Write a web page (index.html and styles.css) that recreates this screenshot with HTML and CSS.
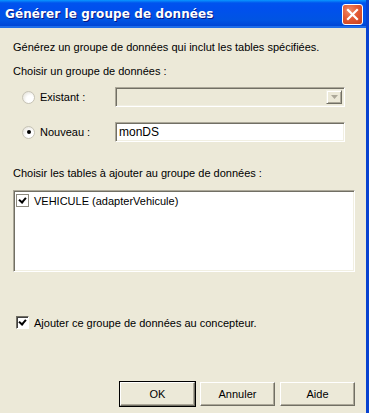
FILE: index.html
```html
<!DOCTYPE html>
<html lang="fr">
<head>
    <meta charset="UTF-8">
    <title>Générer le groupe de données</title>
    <link rel="stylesheet" href="styles.css">
</head>
<body>
    <div class="window">
        <div class="titlebar">
            <span class="title">Générer le groupe de données</span>
            <span class="close">
                <svg width="21" height="21" viewBox="0 0 21 21">
                    <path d="M6 6 L15 15 M15 6 L6 15" stroke="#fff" stroke-width="2.2" stroke-linecap="square"/>
                </svg>
            </span>
        </div>
        <div class="content">
            <p class="intro">Générez un groupe de données qui inclut les tables spécifiées.</p>
            <p class="label">Choisir un groupe de données :</p>

            <div class="choice">
                <span class="radio"></span>
                <span class="choice-label">Existant :</span>
                <div class="combo">
                    <span class="combo-btn">
                        <svg width="7" height="4" viewBox="0 0 7 4"><path d="M0 0 H7 L3.5 4 Z" fill="#aca899"/></svg>
                    </span>
                </div>
            </div>

            <div class="choice choice-new">
                <span class="radio checked"></span>
                <span class="choice-label">Nouveau :</span>
                <div class="field">monDS</div>
            </div>

            <p class="label label-tables">Choisir les tables à ajouter au groupe de données :</p>
            <div class="listbox">
                <div class="list-item">
                    <span class="check"></span>
                    <span>VEHICULE (adapterVehicule)</span>
                </div>
            </div>

            <div class="designer">
                <span class="check dark"></span>
                <span>Ajouter ce groupe de données au concepteur.</span>
            </div>

            <div class="buttons">
                <button class="btn default">OK</button>
                <button class="btn">Annuler</button>
                <button class="btn">Aide</button>
            </div>
        </div>
    </div>
</body>
</html>
```

FILE: styles.css
```css
body {
    margin: 0;
    background: #ece9d8;
    font-family: "Liberation Sans", Arial, sans-serif;
    font-size: 11px;
    color: #000;
}
.window {
    width: 369px;
    height: 413px;
    box-sizing: border-box;
    border-right: 3px solid #0842d0;
    background: #ece9d8;
}
.titlebar {
    height: 28px;
    display: flex;
    align-items: center;
    justify-content: space-between;
    padding: 0 3px 0 5px;
    background: linear-gradient(#0997ff 0, #0053ee 3px, #0050ee 8px, #0054e3 20px, #0046d5 26px, #3d95ff 27px, #0043cf 28px);
}
.title {
    color: #fff;
    font-family: "DejaVu Sans", sans-serif;
    font-weight: bold;
    font-size: 12px;
    letter-spacing: 0.1px;
    text-shadow: 1px 1px 0 #0a1883;
}
.close {
    width: 21px;
    height: 21px;
    box-sizing: border-box;
    border: 1px solid #fff;
    border-radius: 3px;
    background: radial-gradient(circle at 35% 30%, #f08c6a 0, #e35a34 45%, #c9401c 100%);
    display: flex;
    margin-top: 1px;
}
.close svg {
    margin: -1px;
}
.content {
    padding: 12px 11px 0 13px;
}
p {
    margin: 0;
    line-height: 13px;
}
.intro {
    margin-top: 1px;
}
.label {
    margin-top: 11px;
}
.choice {
    display: flex;
    align-items: center;
    margin-top: 9px;
    padding-left: 9px;
}
.choice-new {
    margin-top: 15px;
}
.radio {
    width: 11px;
    height: 11px;
    border-radius: 50%;
    border: 1px solid #c6c3b6;
    background: radial-gradient(circle at 65% 65%, #fff 0, #fff 35%, #dcd9cd 100%);
    display: flex;
    align-items: center;
    justify-content: center;
}
.radio.checked::after {
    content: "";
    width: 4px;
    height: 4px;
    border-radius: 50%;
    background: #000;
}
.choice-label {
    margin-left: 5px;
    width: 75px;
}
.combo,
.field {
    width: 230px;
    height: 20px;
    box-sizing: border-box;
    border-top: 1px solid #aca899;
    border-left: 1px solid #aca899;
    border-right: 1px solid #fff;
    border-bottom: 1px solid #fff;
    box-shadow: inset 1px 1px 0 #716f64, inset -1px -1px 0 #f1efe2;
}
.combo {
    background: #ece9d8;
    display: flex;
    justify-content: flex-end;
    padding: 2px;
}
.combo-btn {
    width: 16px;
    box-sizing: border-box;
    border-top: 1px solid #f1efe2;
    border-left: 1px solid #f1efe2;
    border-right: 1px solid #716f64;
    border-bottom: 1px solid #716f64;
    box-shadow: inset 1px 1px 0 #fff, inset -1px -1px 0 #aca899;
    display: flex;
    align-items: center;
    justify-content: center;
}
.field {
    background: #fff;
    padding: 2px 3px;
    line-height: 15px;
    font-size: 12px;
}
.label-tables {
    margin-top: 25px;
}
.listbox {
    margin-top: 10px;
    height: 82px;
    box-sizing: border-box;
    background: #fff;
    border-top: 1px solid #aca899;
    border-left: 1px solid #aca899;
    border-right: 1px solid #fff;
    border-bottom: 1px solid #fff;
    box-shadow: inset 1px 1px 0 #716f64, inset -1px -1px 0 #f1efe2;
    padding: 3px 2px;
}
.list-item,
.designer {
    display: flex;
    align-items: center;
    gap: 5px;
}
.check {
    width: 11px;
    height: 11px;
    border: 1px solid #8d8a7f;
    background: #fff;
    position: relative;
}
.check.dark {
    border-color: #716f64 #fff #fff #716f64;
    box-shadow: inset 1px 1px 0 #404040;
}
.check::after {
    content: "";
    position: absolute;
    left: 2px;
    top: 1px;
    width: 5px;
    height: 3px;
    border-left: 2px solid #000;
    border-bottom: 2px solid #000;
    transform: translate(0, 1px) rotate(-50deg);
    transform-origin: center;
}
.designer {
    margin-top: 44px;
    padding-left: 3px;
}
.buttons {
    display: flex;
    justify-content: flex-end;
    gap: 5px;
    margin-top: 53px;
}
.btn {
    width: 75px;
    height: 24px;
    font-family: "Liberation Sans", Arial, sans-serif;
    font-size: 11px;
    color: #000;
    background: #ece9d8;
    border-top: 1px solid #fff;
    border-left: 1px solid #fff;
    border-right: 1px solid #716f64;
    border-bottom: 1px solid #716f64;
    box-shadow: inset -1px -1px 0 #aca899;
    padding: 0;
}
.btn.default {
    outline: 1px solid #000;
}
```
